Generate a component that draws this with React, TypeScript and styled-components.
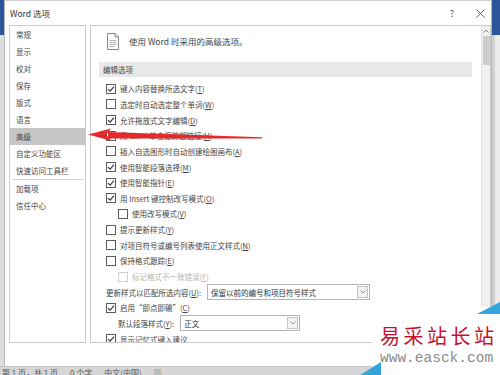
import React from "react";
import styled, { createGlobalStyle } from "styled-components";

const GlobalStyle = createGlobalStyle`
  html, body {
    margin: 0;
    padding: 0;
    width: 500px;
    height: 375px;
    overflow: hidden;
    background: #e4e4e4;
  }
  * { box-sizing: border-box; }
`;

const FONT = `"Noto Sans CJK SC", "Noto Sans", sans-serif`;

const Page = styled.div`
  position: relative;
  width: 500px;
  height: 375px;
  display: flex;
  flex-direction: column;
  font-family: ${FONT};
  color: #444;
  overflow: hidden;
`;

const Main = styled.div`
  display: flex;
  height: 366px;
`;

const LeftEdge = styled.div`
  width: 4px;
  background: linear-gradient(#2b579a 0 35px, #dedede 35px);
`;

const RightEdge = styled.div`
  width: 8px;
  background:
    linear-gradient(#2b579a 0 35px, transparent 35px),
    linear-gradient(90deg, #d0d0d0 0 3px, #ececec 3px);
`;

const Dialog = styled.div`
  flex: 1;
  background: #fff;
  border-left: 1px solid #b8b8b8;
  border-right: 1px solid #b8b8b8;
  border-top: 1px solid #d0d0d0;
  display: flex;
  flex-direction: column;
`;

const TitleBar = styled.div`
  height: 24px;
  display: flex;
  align-items: center;
  padding: 0 6px 0 5px;
  font-size: 8.5px;
  color: #333;
`;

const Title = styled.span`
  flex: 1;
`;

const HelpMark = styled.span`
  font-size: 9px;
  color: #555;
  margin-right: 22px;
`;

const Body = styled.div`
  display: flex;
  gap: 4px;
  padding-left: 4px;
  height: 318px;
`;

const Nav = styled.div`
  width: 77px;
  border: 1px solid #cbcbcb;
  display: flex;
  flex-direction: column;
`;

const NavItem = styled.div<{ $active?: boolean }>`
  height: 17px;
  display: flex;
  align-items: center;
  padding-left: 6px;
  font-size: 7.5px;
  color: #444;
  background: ${(p) => (p.$active ? "#c6c6c6" : "transparent")};
`;

const NavSep = styled.div`
  height: 1px;
  margin: 0 2px 0 2px;
  background: #d8d8d8;
`;

const Panel = styled.div`
  flex: 1;
  border: 1px solid #cbcbcb;
  display: flex;
`;

const Content = styled.div`
  flex: 1;
  overflow: hidden;
  padding: 0 9px 0 8px;
`;

const Header = styled.div`
  height: 30px;
  display: flex;
  align-items: center;
  gap: 10px;
  padding-left: 8px;
  margin-bottom: 6px;
  font-size: 8.5px;
  color: #444;
`;

const SectionBand = styled.div`
  height: 15px;
  background: #e8e8e8;
  display: flex;
  align-items: center;
  padding-left: 4px;
  font-size: 7.5px;
  color: #444;
  margin-bottom: 4px;
`;

const Row = styled.div<{ $indent?: boolean; $disabled?: boolean }>`
  height: 15.65px;
  display: flex;
  align-items: center;
  padding-left: ${(p) => (p.$indent ? 19 : 7)}px;
  font-size: 7.5px;
  color: ${(p) => (p.$disabled ? "#b4b4b4" : "#444")};
  white-space: nowrap;
`;

const Box = styled.span<{ $disabled?: boolean }>`
  width: 10px;
  height: 10px;
  border: 1px solid ${(p) => (p.$disabled ? "#cfcfcf" : "#5a5a5a")};
  margin-right: 4px;
  flex: none;
  display: flex;
  align-items: center;
  justify-content: center;
  background: #fff;
`;

const Key = styled.span`
  text-decoration: underline;
`;

const Select = styled.div<{ $w: number }>`
  width: ${(p) => p.$w}px;
  height: 16px;
  margin-left: 6px;
  border: 1px solid #b4b4b4;
  display: flex;
  align-items: center;
  padding-left: 3px;
  padding-right: 1px;
  font-size: 7.5px;
  color: #333;
  background: #fff;
`;

const SelectText = styled.span`
  flex: 1;
`;

const DropBtn = styled.span`
  width: 11px;
  height: 12px;
  border: 1px solid #c4c4c4;
  background: #f2f2f2;
  display: flex;
  align-items: center;
  justify-content: center;
`;

const Scrollbar = styled.div`
  width: 9px;
  background: #f0f0f0;
  border-left: 1px solid #e4e4e4;
  display: flex;
  flex-direction: column;
  align-items: center;
  padding-top: 3px;
`;

const Thumb = styled.div`
  width: 7px;
  height: 29px;
  margin-top: 3px;
  background: #cdcdcd;
`;

const StatusBar = styled.div`
  height: 9px;
  background: #d6d6d6;
  border-top: 1px solid #c2c2c2;
  display: flex;
  gap: 12px;
  padding-left: 2px;
  font-size: 8px;
  line-height: 12px;
  color: #555;
  overflow: hidden;
`;

const Overlay = styled.svg`
  position: absolute;
  left: 0;
  top: 0;
  pointer-events: none;
`;

const Watermark = styled.div`
  position: absolute;
  right: 0;
  bottom: 0;
  width: 128px;
  height: 68px;
  background: radial-gradient(ellipse at 65% 60%, #fff 62%, rgba(255,255,255,0.85) 75%, rgba(255,255,255,0) 100%);
  display: flex;
  flex-direction: column;
  padding: 16px 0 0 8px;
`;

const WmTitle = styled.div`
  font-family: "Noto Sans CJK SC", serif;
  font-size: 20px;
  line-height: 26px;
  letter-spacing: 3.5px;
  color: #c41230;
  white-space: nowrap;
`;

const WmUrl = styled.div`
  font-family: "Liberation Mono", monospace;
  font-size: 14.5px;
  line-height: 16px;
  color: #8a8a8a;
  white-space: nowrap;
  margin-top: 1px;
`;

const Check = () => (
  <svg width="8" height="8" viewBox="0 0 8 8">
    <path d="M1 4.2 L3.1 6.2 L7 1.6" fill="none" stroke="#333" strokeWidth="1.1" />
  </svg>
);

const Chevron = () => (
  <svg width="6" height="4" viewBox="0 0 6 4">
    <path d="M0.5 0.5 L3 3 L5.5 0.5" fill="none" stroke="#888" strokeWidth="0.9" />
  </svg>
);

const DocIcon = () => (
  <svg width="12" height="17" viewBox="0 0 12 17">
    <path d="M0.5 0.5 H8 L11.5 4 V16.5 H0.5 Z" fill="#fff" stroke="#8a8a8a" />
    <path d="M8 0.5 V4 H11.5" fill="none" stroke="#8a8a8a" />
    <path d="M2.5 7.5 H9.5 M2.5 9.5 H9.5 M2.5 11.5 H9.5 M2.5 13.5 H7.5" stroke="#9a9a9a" strokeWidth="0.8" />
  </svg>
);

type CheckRow = {
  kind: "check";
  checked: boolean;
  text: string;
  k?: string;
  indent?: boolean;
  disabled?: boolean;
};
type SelRow = { kind: "select"; label: string; k: string; value: string; w: number; indent?: boolean };

const rows: (CheckRow | SelRow)[] = [
  { kind: "check", checked: true, text: "键入内容替换所选文字", k: "T" },
  { kind: "check", checked: false, text: "选定时自动选定整个单词", k: "W" },
  { kind: "check", checked: true, text: "允许拖放式文字编辑", k: "D" },
  { kind: "check", checked: true, text: "用 Ctrl + 单击跟踪超链接", k: "H" },
  { kind: "check", checked: false, text: "插入自选图形时自动创建绘图画布", k: "A" },
  { kind: "check", checked: true, text: "使用智能段落选择", k: "M" },
  { kind: "check", checked: true, text: "使用智能指针", k: "E" },
  { kind: "check", checked: true, text: "用 Insert 键控制改写模式", k: "O" },
  { kind: "check", checked: false, text: "使用改写模式", k: "V", indent: true },
  { kind: "check", checked: false, text: "提示更新样式", k: "Y" },
  { kind: "check", checked: false, text: "对项目符号或编号列表使用正文样式", k: "N" },
  { kind: "check", checked: false, text: "保持格式跟踪", k: "E" },
  { kind: "check", checked: false, text: "标记格式不一致错误", k: "F", indent: true, disabled: true },
  { kind: "select", label: "更新样式以匹配所选内容", k: "U", value: "保留以前的编号和项目符号样式", w: 163 },
  { kind: "check", checked: true, text: "启用“即点即输”", k: "C" },
  { kind: "select", label: "默认段落样式", k: "Y", value: "正文", w: 120, indent: true },
  { kind: "check", checked: true, text: "显示记忆式键入建议", k: "" },
];

const navItems = ["常规", "显示", "校对", "保存", "版式", "语言", "高级", "自定义功能区", "快速访问工具栏"];

export default function App() {
  return (
    <Page>
      <GlobalStyle />
      <Main>
        <LeftEdge />
        <Dialog>
          <TitleBar>
            <Title>Word 选项</Title>
            <HelpMark>?</HelpMark>
            <svg width="9" height="9" viewBox="0 0 9 9">
              <path d="M0.5 0.5 L8.5 8.5 M8.5 0.5 L0.5 8.5" stroke="#555" strokeWidth="0.9" />
            </svg>
          </TitleBar>
          <Body>
            <Nav>
              {navItems.map((n) => (
                <NavItem key={n} $active={n === "高级"}>
                  {n}
                </NavItem>
              ))}
              <NavSep />
              <NavItem>加载项</NavItem>
              <NavItem>信任中心</NavItem>
            </Nav>
            <Panel>
              <Content>
                <Header>
                  <DocIcon />
                  <span>使用 Word 时采用的高级选项。</span>
                </Header>
                <SectionBand>编辑选项</SectionBand>
                {rows.map((r, i) =>
                  r.kind === "check" ? (
                    <Row key={i} $indent={r.indent} $disabled={r.disabled}>
                      <Box $disabled={r.disabled}>{r.checked && <Check />}</Box>
                      <span>
                        {r.text}
                        {r.k && (
                          <>
                            (<Key>{r.k}</Key>)
                          </>
                        )}
                      </span>
                    </Row>
                  ) : (
                    <Row key={i} $indent={r.indent}>
                      <span>
                        {r.label}(<Key>{r.k}</Key>):
                      </span>
                      <Select $w={r.w}>
                        <SelectText>{r.value}</SelectText>
                        <DropBtn>
                          <Chevron />
                        </DropBtn>
                      </Select>
                    </Row>
                  )
                )}
              </Content>
              <Scrollbar>
                <svg width="6" height="4" viewBox="0 0 6 4">
                  <path d="M0.5 3.5 L3 1 L5.5 3.5" fill="none" stroke="#777" strokeWidth="0.9" />
                </svg>
                <Thumb />
              </Scrollbar>
            </Panel>
          </Body>
        </Dialog>
        <RightEdge />
      </Main>
      <StatusBar>
        <span>第 1 页，共 1 页</span>
        <span>0 个字</span>
        <span>中文(中国)</span>
        <span>▥</span>
      </StatusBar>
      <Watermark>
        <WmTitle>易采站长站</WmTitle>
        <WmUrl>www.easck.com</WmUrl>
      </Watermark>
      <Overlay width="500" height="375" viewBox="0 0 500 375">
        <polygon points="108,132 262,137.2 262,138.6 108,138.5" fill="#e32b2b" />
        <polygon points="88,134.6 111,128.5 106,134.8 111,140.8" fill="#e32b2b" />
        <polygon points="477,314 500,302 500,314" fill="#35a3dc" />
        <polygon points="360,375 381,362 381,375" fill="#35a3dc" />
      </Overlay>
    </Page>
  );
}
